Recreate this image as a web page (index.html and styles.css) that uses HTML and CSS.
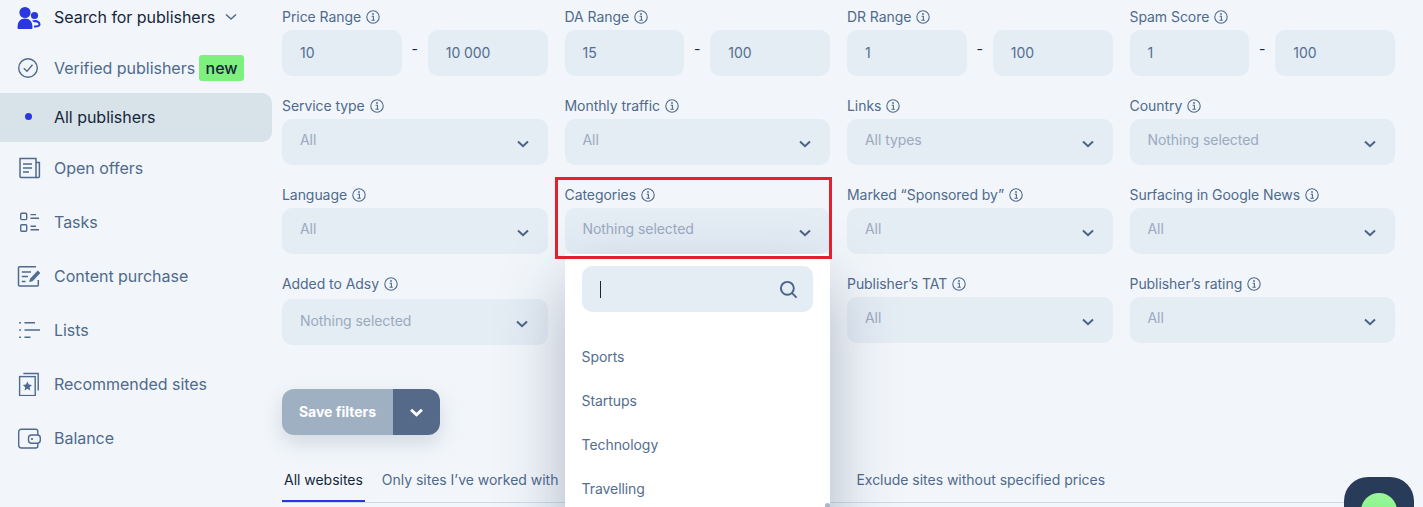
FILE: index.html
```html
<!DOCTYPE html>
<html lang="en">
<head>
    <meta charset="UTF-8">
    <meta name="viewport" content="width=device-width, initial-scale=1.0">
    <title>Search for publishers</title>
    <link rel="stylesheet" href="styles.css">
</head>
<body>
    <svg class="defs" width="0" height="0">
        <symbol id="info" viewBox="0 0 14 14">
            <circle cx="7" cy="7" r="6.2" fill="none" stroke="currentColor" stroke-width="1.1"/>
            <circle cx="7" cy="4" r="0.9" fill="currentColor"/>
            <path d="M5.6 6.2H7.4V10M5.4 10.2H8.8" fill="none" stroke="currentColor" stroke-width="1.1"/>
        </symbol>
        <symbol id="chevron" viewBox="0 0 12 8">
            <path d="M1 1.5L6 6.2L11 1.5" fill="none" stroke="currentColor"/>
        </symbol>
    </svg>

    <aside class="sidebar">
        <div class="nav-item nav-head">
            <svg class="nav-icon" viewBox="0 0 24 24" fill="#2a37e0">
                <circle cx="8" cy="7.5" r="5.6"/>
                <path d="M0.5 22.5C0.5 16.5 3.5 13.5 8 13.5S15.5 16.5 15.5 22.5C15.5 23.5 15 24 14 24H2C1 24 0.5 23.5 0.5 22.5Z"/>
                <circle cx="17.5" cy="10.5" r="3.6"/>
                <path d="M15 15.5C19 14 23.5 15.5 23.5 19.5C23.5 21.5 21.5 22.5 17 22.5V20.5C20 20.5 21.5 20.5 21.5 19.3C21.5 17.5 19 16.8 16.8 17.3Z"/>
            </svg>
            <span>Search for publishers</span>
            <svg class="nav-caret" viewBox="0 0 12 8"><path d="M1 1.5L6 6L11 1.5" fill="none" stroke="currentColor" stroke-width="1.6"/></svg>
        </div>
        <div class="nav-item nav-sub">
            <svg class="nav-icon" viewBox="0 0 24 24" fill="none" stroke="currentColor" stroke-width="1.4">
                <circle cx="11" cy="12" r="9.3"/>
                <path d="M6.8 12.2L10 15.2L15.5 8.8"/>
            </svg>
            <span>Verified publishers</span>
            <span class="badge">new</span>
        </div>
        <div class="nav-item nav-sub nav-active">
            <span class="nav-dot"></span>
            <span>All publishers</span>
        </div>
        <div class="nav-item">
            <svg class="nav-icon" viewBox="0 0 24 24" fill="none" stroke="currentColor" stroke-width="1.5">
                <path d="M3 2.5H19V21.5H4C3.4 21.5 3 21.1 3 20.5Z"/>
                <path d="M6 8H15M6 12H15M6 16H12"/>
                <path d="M19 6.5H22.4V20.5C22.4 21.1 22 21.5 21.4 21.5H19"/>
            </svg>
            <span>Open offers</span>
        </div>
        <div class="nav-item">
            <svg class="nav-icon" viewBox="0 0 24 24" fill="none" stroke="currentColor" stroke-width="1.4">
                <rect x="3.7" y="3.2" width="6" height="6.4" rx="1"/>
                <rect x="3.7" y="14.8" width="6" height="6.4" rx="1"/>
                <path d="M13.5 4.6H19M13.5 8.2H22M13.5 16.2H19M13.5 19.8H22"/>
            </svg>
            <span>Tasks</span>
        </div>
        <div class="nav-item">
            <svg class="nav-icon" viewBox="0 0 24 24" fill="none" stroke="currentColor" stroke-width="1.5">
                <path d="M19 2.8H2.5C2 2.8 1.5 3.2 1.5 3.8V21C1.5 21.6 2 22 2.5 22H20.3C20.8 22 21.3 21.6 21.3 21V16"/>
                <path d="M4.8 8H14M4.8 12.6H11M4.8 17.4H8.5"/>
                <path d="M12.5 17.8L13.5 14.5L20.8 6.8L23 9L15.8 16.7Z" fill="currentColor" stroke-width="0.6"/>
            </svg>
            <span>Content purchase</span>
        </div>
        <div class="nav-item">
            <svg class="nav-icon" viewBox="0 0 24 24" fill="none" stroke="currentColor" stroke-width="1.5">
                <path d="M2.2 4.7H4M7.5 4.7H18M2.2 12H4M7.5 12H23M2.2 19.3H4M7.5 19.3H13.5"/>
            </svg>
            <span>Lists</span>
        </div>
        <div class="nav-item">
            <svg class="nav-icon" viewBox="0 0 24 24" fill="none" stroke="currentColor" stroke-width="1.4">
                <rect x="2.6" y="4.6" width="15.6" height="19"/>
                <path d="M6.4 1.5H21.2V18.6"/>
                <path d="M10.4 9.6L11.8 12.6L15 13L12.6 15.2L13.3 18.4L10.4 16.8L7.5 18.4L8.2 15.2L5.8 13L9 12.6Z" fill="currentColor" stroke="none"/>
            </svg>
            <span>Recommended sites</span>
        </div>
        <div class="nav-item">
            <svg class="nav-icon" viewBox="0 0 24 24" fill="none" stroke="currentColor" stroke-width="1.4">
                <path d="M20.8 9V5.3C20.8 4.1 20 3.3 18.8 3.3H4.5C2.8 3.3 1.7 4.4 1.7 6V19.3C1.7 21 2.8 22 4.5 22H18.8C20 22 20.8 21.2 20.8 20V17.2"/>
                <rect x="11.5" y="9" width="11.8" height="8.2" rx="3"/>
                <circle cx="15" cy="13" r="1.1" fill="currentColor" stroke="none"/>
            </svg>
            <span>Balance</span>
        </div>
    </aside>

    <main class="content">
        <section class="filters">
            <div class="filter">
                <div class="filter-label">Price Range <svg class="info"><use href="#info"/></svg></div>
                <div class="range"><div class="field">10</div><span class="range-dash">-</span><div class="field">10 000</div></div>
            </div>
            <div class="filter">
                <div class="filter-label">DA Range <svg class="info"><use href="#info"/></svg></div>
                <div class="range"><div class="field">15</div><span class="range-dash">-</span><div class="field">100</div></div>
            </div>
            <div class="filter">
                <div class="filter-label">DR Range <svg class="info"><use href="#info"/></svg></div>
                <div class="range"><div class="field">1</div><span class="range-dash">-</span><div class="field">100</div></div>
            </div>
            <div class="filter">
                <div class="filter-label">Spam Score <svg class="info"><use href="#info"/></svg></div>
                <div class="range"><div class="field">1</div><span class="range-dash">-</span><div class="field">100</div></div>
            </div>

            <div class="filter">
                <div class="filter-label">Service type <svg class="info"><use href="#info"/></svg></div>
                <div class="select"><span>All</span><svg class="chevron"><use href="#chevron"/></svg></div>
            </div>
            <div class="filter">
                <div class="filter-label">Monthly traffic <svg class="info"><use href="#info"/></svg></div>
                <div class="select"><span>All</span><svg class="chevron"><use href="#chevron"/></svg></div>
            </div>
            <div class="filter">
                <div class="filter-label">Links <svg class="info"><use href="#info"/></svg></div>
                <div class="select"><span>All types</span><svg class="chevron"><use href="#chevron"/></svg></div>
            </div>
            <div class="filter">
                <div class="filter-label">Country <svg class="info"><use href="#info"/></svg></div>
                <div class="select"><span>Nothing selected</span><svg class="chevron"><use href="#chevron"/></svg></div>
            </div>

            <div class="filter">
                <div class="filter-label">Language <svg class="info"><use href="#info"/></svg></div>
                <div class="select"><span>All</span><svg class="chevron"><use href="#chevron"/></svg></div>
            </div>
            <div class="filter filter-open">
                <div class="filter-label">Categories <svg class="info"><use href="#info"/></svg></div>
                <div class="select"><span>Nothing selected</span><svg class="chevron"><use href="#chevron"/></svg></div>
                <div class="dropdown">
                    <div class="dropdown-search">
                        <span class="caret"></span>
                        <svg class="search-icon" viewBox="0 0 20 20" fill="none" stroke="currentColor" stroke-width="2">
                            <circle cx="8.8" cy="8.8" r="6.8"/>
                            <path d="M13.8 13.8L18.5 18.5"/>
                        </svg>
                    </div>
                    <ul class="dropdown-list">
                        <li>Sports</li>
                        <li>Startups</li>
                        <li>Technology</li>
                        <li>Travelling</li>
                    </ul>
                    <span class="dropdown-thumb"></span>
                </div>
                <div class="highlight"></div>
            </div>
            <div class="filter">
                <div class="filter-label">Marked “Sponsored by” <svg class="info"><use href="#info"/></svg></div>
                <div class="select"><span>All</span><svg class="chevron"><use href="#chevron"/></svg></div>
            </div>
            <div class="filter">
                <div class="filter-label">Surfacing in Google News <svg class="info"><use href="#info"/></svg></div>
                <div class="select"><span>All</span><svg class="chevron"><use href="#chevron"/></svg></div>
            </div>

            <div class="filter">
                <div class="filter-label">Added to Adsy <svg class="info"><use href="#info"/></svg></div>
                <div class="select select-date"><span>Nothing selected</span><svg class="chevron"><use href="#chevron"/></svg></div>
            </div>
            <div class="filter"></div>
            <div class="filter">
                <div class="filter-label">Publisher’s TAT <svg class="info"><use href="#info"/></svg></div>
                <div class="select"><span>All</span><svg class="chevron"><use href="#chevron"/></svg></div>
            </div>
            <div class="filter">
                <div class="filter-label">Publisher’s rating <svg class="info"><use href="#info"/></svg></div>
                <div class="select"><span>All</span><svg class="chevron"><use href="#chevron"/></svg></div>
            </div>
        </section>

        <div class="save">
            <button class="save-main" type="button">Save filters</button>
            <button class="save-more" type="button"><svg class="chevron"><use href="#chevron"/></svg></button>
        </div>

        <nav class="tabs">
            <a class="tab tab-active" href="#">All websites</a>
            <a class="tab" href="#">Only sites I’ve worked with</a>
            <span class="tab-gap"></span>
            <a class="tab" href="#">Exclude sites without specified prices</a>
        </nav>
    </main>

    <div class="chat"><span class="chat-dot"></span></div>
</body>
</html>
```

FILE: styles.css
```css
* {
    box-sizing: border-box;
}
html, body {
    height: 100%;
}
body {
    display: flex;
    margin: 0;
    overflow: hidden;
    background: #f2f6fa;
    font-family: Inter, "Liberation Sans", sans-serif;
    font-size: 14px;
    letter-spacing: -0.06px;
    color: #4f6a8c;
}
.defs {
    position: absolute;
}

/* sidebar */
.sidebar {
    flex: 0 0 272px;
}
.nav-item {
    display: flex;
    align-items: center;
    gap: 13px;
    height: 54px;
    padding-left: 17px;
    font-size: 16px;
    letter-spacing: -0.03px;
    color: #4f6a8c;
}
.nav-head {
    height: 34px;
    margin-bottom: 10px;
    color: #16263a;
}
.nav-sub {
    height: 49px;
    padding-bottom: 2px;
}
.nav-sub + .nav-item:not(.nav-sub) {
    height: 53px;
    padding-bottom: 1px;
}
.nav-active {
    border-radius: 0 10px 10px 0;
    background: #d8e2e9;
    color: #16263a;
}
.nav-icon {
    flex: 0 0 24px;
    width: 24px;
    height: 24px;
}
.nav-caret {
    width: 12px;
    height: 8px;
    margin-left: -3px;
    color: #4f6a8c;
}
.nav-dot {
    width: 7px;
    height: 7px;
    margin: 0 9px 0 8px;
    border-radius: 50%;
    background: #2a37e0;
}
.badge {
    margin-left: -9px;
    padding: 0 6.5px;
    height: 26px;
    line-height: 26px;
    border-radius: 3px;
    background: #7df07d;
    font-weight: 500;
    color: #16263a;
}

/* filters */
.content {
    flex: 1;
    min-width: 0;
    padding: 0 28px 0 10px;
}
.filters {
    display: grid;
    grid-template-columns: repeat(4, 1fr);
    column-gap: 17px;
    row-gap: 13px;
}
.filter {
    position: relative;
}
.filter-label {
    display: flex;
    align-items: center;
    gap: 5px;
    height: 30px;
    padding-top: 3px;
}
.info {
    width: 14px;
    height: 14px;
    color: #4f6a8c;
}
.range {
    display: grid;
    grid-template-columns: 1fr 26px 1fr;
}
.range-dash {
    margin-top: 10px;
    text-align: center;
    color: #16263a;
}
.field, .select {
    height: 46px;
    border-radius: 10px;
    background: #e4ecf4;
}
.field {
    padding: 0 18px;
    line-height: 46px;
    color: #546e90;
}
.select {
    display: flex;
    justify-content: space-between;
    align-items: center;
    padding: 0 19px 0 18px;
    color: #9aaabf;
}
.select span {
    margin-top: -6px;
}
.select-date {
    margin-top: 2px;
    padding-right: 20px;
}
.select-date span {
    margin-top: -4px;
}
.chevron {
    width: 12px;
    height: 8px;
    margin-top: 3px;
    stroke-width: 2;
    color: #4a6285;
}

/* opened categories list */
.dropdown {
    position: absolute;
    z-index: 5;
    top: 76px;
    left: 0;
    right: 0;
    height: 300px;
    padding: 12px 17px 0;
    background: #fff;
    box-shadow: 0 30px 60px rgba(45, 65, 105, 0.35);
}
.dropdown-search {
    display: flex;
    justify-content: space-between;
    align-items: center;
    height: 46px;
    padding: 0 15px 0 18px;
    border-radius: 10px;
    background: #e4ecf4;
}
.caret {
    width: 1px;
    height: 17px;
    background: #16263a;
}
.search-icon {
    width: 19px;
    height: 19px;
    color: #4a6285;
}
.dropdown-list {
    margin: 23px 0 0;
    padding: 0;
    list-style: none;
    color: #546e90;
}
.dropdown-list li {
    height: 44px;
    line-height: 44px;
}
.dropdown-thumb {
    position: absolute;
    top: 249px;
    right: 0;
    width: 5px;
    height: 40px;
    border-radius: 3px;
    background: #a9b7c7;
}
.highlight {
    position: absolute;
    z-index: 6;
    top: -1px;
    left: -10px;
    right: -2px;
    height: 82px;
    border: 3px solid #e3202c;
    pointer-events: none;
}

/* save button and tabs */
.save {
    display: flex;
    width: 158px;
    height: 46px;
    margin-top: 44px;
    border-radius: 12px;
    box-shadow: 0 8px 20px rgba(60, 85, 120, 0.18);
}
.save button {
    padding: 0 0 2px;
    border: 0;
    font: inherit;
    color: #fff;
}
.save .save-main {
    flex: 0 0 111px;
    border-radius: 12px 0 0 12px;
    background: #a0b0c3;
    font-weight: 700;
}
.save-more {
    flex: 1;
    border-radius: 0 12px 12px 0;
    background: #546a88;
}
.save-more .chevron {
    width: 13px;
    height: 9px;
    margin-top: 0;
    stroke-width: 2.6;
    color: #fff;
}
.tabs {
    display: flex;
    gap: 15px;
    height: 45px;
    margin-top: 23px;
    border-bottom: 1px solid #cfdbe8;
    letter-spacing: -0.02px;
}
.tab {
    height: 44px;
    padding: 13px 2px 0;
    color: #4f6a8c;
    text-decoration: none;
    white-space: nowrap;
}
.tab-active {
    border-bottom: 2px solid #2a37e0;
    color: #16263a;
}
.tab-gap {
    flex: 0 0 264px;
}
.chat {
    position: fixed;
    z-index: 7;
    top: 477px;
    left: 1344px;
    width: 70px;
    height: 70px;
    padding: 16px 17px;
    border-radius: 24px;
    background: #283c5a;
}
.chat-dot {
    display: block;
    width: 36px;
    height: 36px;
    border-radius: 50%;
    background: linear-gradient(#9af79a, #7df07d);
}
```
